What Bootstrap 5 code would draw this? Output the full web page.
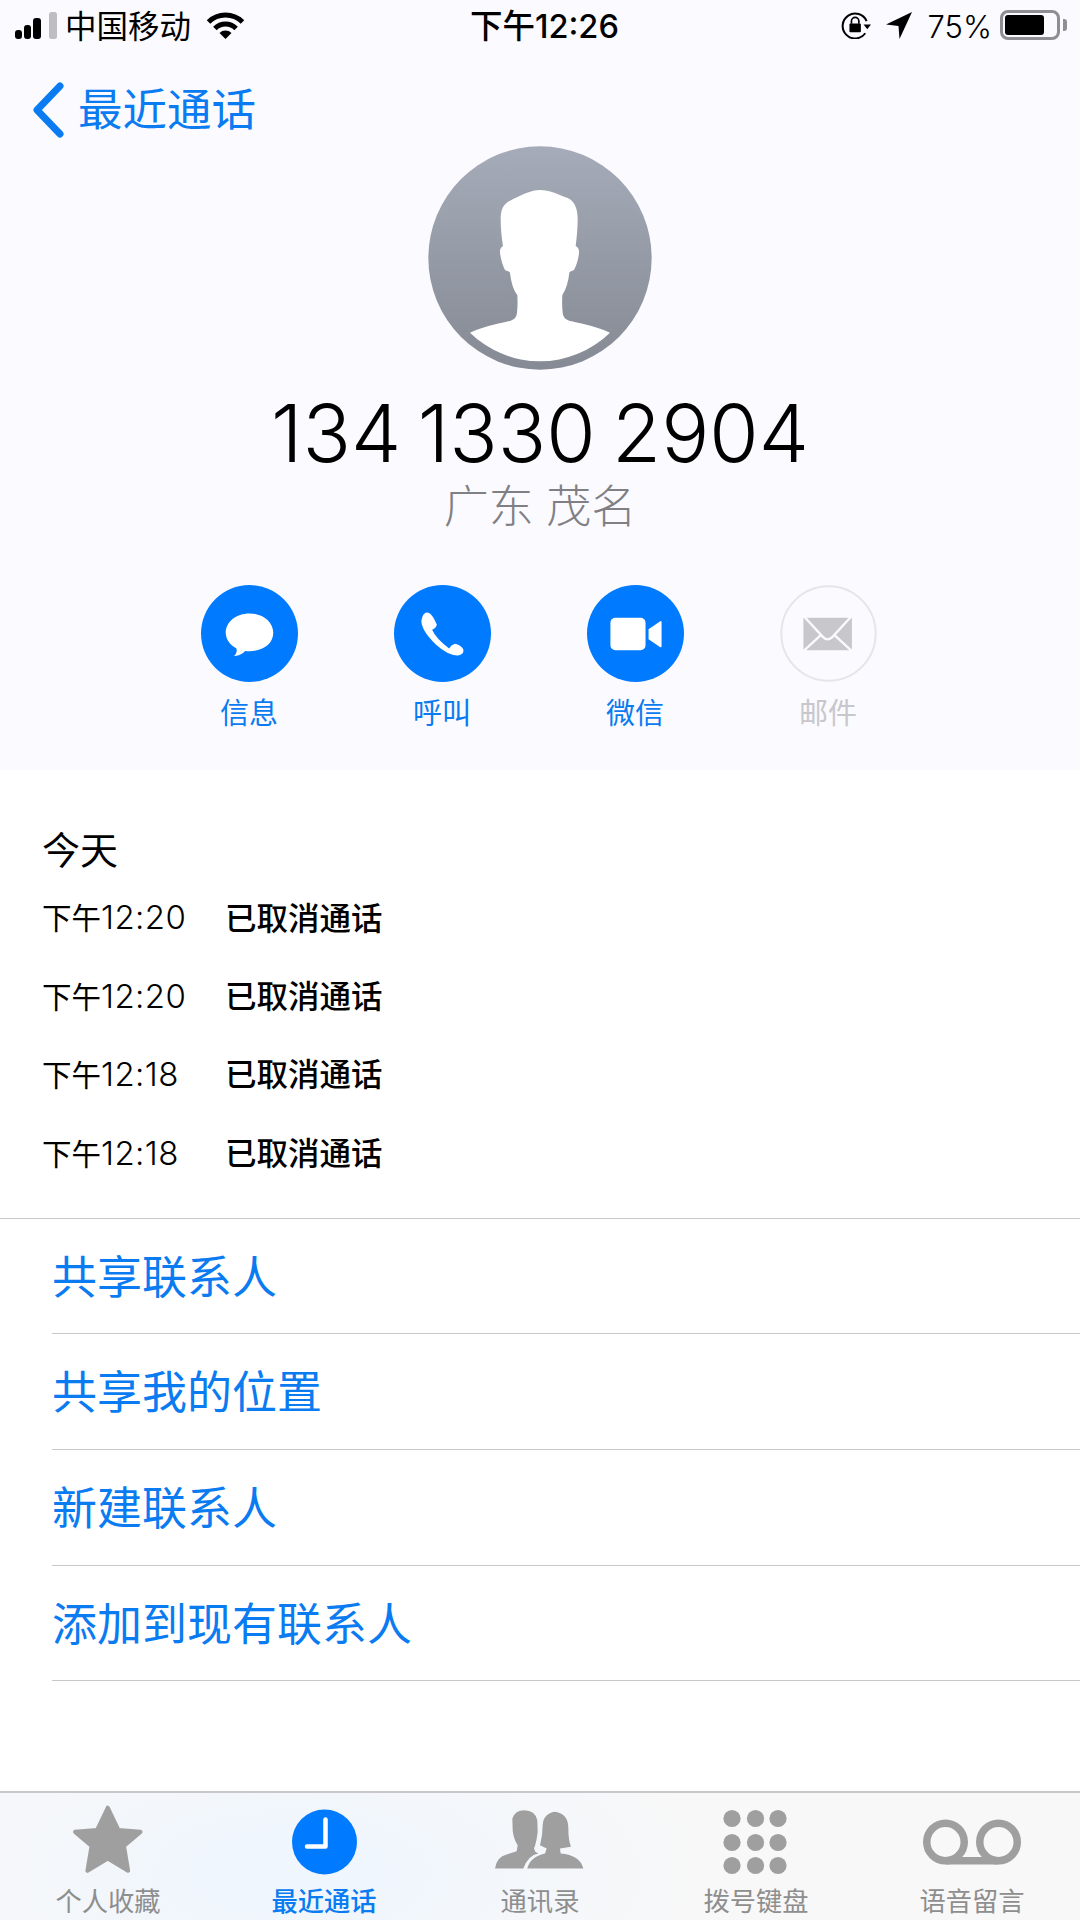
<!DOCTYPE html>
<html lang="zh">
<head>
<meta charset="utf-8">
<title>最近通话</title>
<link href="https://cdn.jsdelivr.net/npm/bootstrap@5.3.0/dist/css/bootstrap.min.css" rel="stylesheet">
<style>
html,body{margin:0;width:1080px;height:1920px;overflow:hidden;background:#fff}
body{font-family:Inter,"Noto Sans CJK SC",sans-serif;color:#000}
.phone{width:1080px;height:1920px}
.hero{height:770px;background:#fbfaff;flex:none}
.sbar{height:50px;padding:3px 13px 0 0}
.sleft{flex:0 0 470px;padding-left:15px;font-size:31.500px}
.sleft svg{margin-top:-3px}
.stime{font-size:32.500px;font-weight:500;line-height:47px;width:148px;white-space:nowrap}
.spct{font-size:31px;font-weight:300;line-height:47px;margin:0 8px 0 16px}
.lockic{margin-right:14px}
.sright svg,.sright .batt,.sright .nub{margin-top:-3px}
.batt{width:60px;height:30px;border:3px solid #8e8e93;border-radius:8px;padding:2px}
.battin{width:39px;height:100%;background:#000;border-radius:3px}
.nub{width:4px;height:12px;background:#8e8e93;border-radius:0 3px 3px 0;margin:0 0 0 3px}
.backrow{height:50px;margin-top:35px;padding-left:30px;color:#0a7bf0;font-size:44.500px;line-height:50px;text-decoration:none}
.backrow svg{margin-right:12px}
.avatar{margin:11px auto 0;display:block}
.phnum{font-size:80px;font-weight:350;line-height:88px;margin-top:19px;word-spacing:-6px}
.region{font-size:45px;line-height:50px;margin-top:5px;color:#808084;font-weight:300}
.acts{margin-top:53px;padding-right:3px}
.actitem{width:193px;font-size:29px;line-height:38px;color:#0a7bf0}
.actitem svg{display:block;margin:0 auto 13px}
.actoff{color:#c7c7cc}
.hist{padding:55px 0 25px 42px;border-bottom:1px solid #c8c7cc;flex:none}
.histh{font-size:38px;line-height:50px;margin-bottom:4px}
.hrow{height:78.400px;font-size:29.500px}
.htime{width:183px}
.tnum{font-size:33px;font-weight:300;letter-spacing:.4px}
.hstat{font-weight:500;font-size:31.500px}
.actlist.list-group-flush>.list-group-item{height:115.700px;margin-left:52px;padding:3px 0 0;border:0;border-bottom:1px solid #c8c7cc;background:transparent;color:#0a7bf0;font-size:45px;font-weight:400;display:flex;align-items:center}
.tabs{margin-top:auto;height:129px;border-top:2px solid #c8c7cc;background:radial-gradient(ellipse 420px 190px at 290px 80px,#f0f6fd 20%,#f8f8f8 100%);overflow:hidden;flex:none}
.tabitem{width:216px;font-size:26.300px;line-height:36px;color:#8e8e8e;white-space:nowrap}
.tabitem svg{display:block;margin:0 auto}
.tabon{color:#0a7bf0;font-weight:500}
</style>
</head>
<body>
<div class="phone d-flex flex-column">
  <section class="hero">
    <div class="sbar d-flex align-items-center">
      <div class="sleft d-flex align-items-center">
        <svg width="42" height="27" viewBox="0 0 42 27" fill="#000"><rect x="0" y="18" width="7" height="9" rx="3"/><rect x="9" y="13" width="7" height="14" rx="3"/><rect x="18" y="6" width="8" height="21" rx="3"/><rect x="34" y="0" width="8" height="27" rx="2.500" fill="#bdbdc2"/></svg>
        <span class="ms-2">中国移动</span>
        <svg class="ms-3" width="37" height="27" viewBox="0 0 37 27" fill="none" stroke="#000" stroke-width="5"><path d="M1.500 10A24 24 0 0 1 35.500 10"/><path d="M7.900 16.400A15 15 0 0 1 29.100 16.400"/><path d="M18.500 27L12.500 21A8.500 8.500 0 0 1 24.500 21Z" fill="#000" stroke="none"/></svg>
      </div>
      <div class="stime">下午12:26</div>
      <div class="sright flex-grow-1 d-flex align-items-center justify-content-end">
        <svg class="lockic" width="32" height="27" viewBox="62 25 95 80" fill="none" stroke="#000" stroke-width="6"><path d="M141 52A37 37 0 1 0 137 88"/><path d="M132 62L154 62L143 76Z" fill="#000" stroke="none"/><rect x="90" y="59" width="34" height="26" rx="3" fill="#000" stroke="none"/><path d="M96 60V52A11 11 0 0 1 118 52V60" stroke-width="5"/></svg>
        <svg width="26" height="27" viewBox="0 0 26 27"><path d="M26 0L0 12.500L12.500 14L13.500 27Z" fill="#000"/></svg>
        <span class="spct">75%</span>
        <div class="batt"><div class="battin"></div></div>
        <div class="nub"></div>
      </div>
    </div>
    <a class="backrow d-flex align-items-center" href="#">
      <svg width="36" height="56" viewBox="0 0 36 56" fill="none" stroke="#0a7bf0" stroke-width="7" stroke-linecap="round" stroke-linejoin="round"><path d="M30 4L7 28L30 52"/></svg>
      <span>最近通话</span>
    </a>
    <svg class="avatar" width="224" height="224" viewBox="85 48 670 672">
      <defs><linearGradient id="av" x1="0" y1="0" x2="0" y2="1"><stop offset="0" stop-color="#a5abb8"/><stop offset="1" stop-color="#858a94"/></linearGradient></defs>
      <circle cx="420" cy="384" r="335" fill="url(#av)"/>
      <path fill="#fff" d="M420 180C450 180 470 192 505 205C525 216 533 238 533 268C533 295 530 325 527 348C534 352 538 358 537 368C535 392 528 408 522 420C515 424 510 424 508 428C505 455 498 478 487 495C486 515 486 530 488 548C490 565 500 570 515 574C555 583 595 592 630 608A300 300 0 0 1 210 608C245 592 285 583 325 574C340 570 349 565 351 548C353 530 353 515 352 495C340 480 333 455 330 428C328 424 322 424 315 420C309 408 303 392 300 368C299 358 303 352 309 348C305 325 302 295 302 268C302 238 310 222 330 212C360 198 390 180 420 180Z"/>
    </svg>
    <div class="phnum text-center">134 1330 2904</div>
    <div class="region text-center">广东 茂名</div>
    <div class="acts d-flex justify-content-center text-center">
      <div class="actitem">
        <svg width="97" height="97" viewBox="0 0 290 290"><circle cx="145" cy="145" r="145" fill="#007aff"/><path fill="#fff" d="M145 85C185 85 216 110 216 143C216 176 185 198 145 198C140 198 136 198 132 197C125 205 112 212 99 212C106 205 108 198 106 190C87 180 74 163 74 143C74 110 105 85 145 85Z"/></svg>
        信息
      </div>
      <div class="actitem">
        <svg width="97" height="97" viewBox="0 0 290 290"><circle cx="145" cy="145" r="145" fill="#007aff"/><path fill="#fff" d="M85 95Q92 78 105 84Q114 88 128 118Q127 128 114 134Q125 160 165 190Q170 180 182 176Q200 180 207 192Q211 205 195 210Q165 214 125 178Q80 135 82 105Z"/></svg>
        呼叫
      </div>
      <div class="actitem">
        <svg width="97" height="97" viewBox="0 0 290 290"><circle cx="145" cy="145" r="145" fill="#007aff"/><rect x="70" y="98" width="105" height="97" rx="15" fill="#fff"/><path fill="#fff" d="M184 132L218 109Q223 106 223 112V182Q223 188 218 185L184 162Z"/></svg>
        微信
      </div>
      <div class="actitem actoff">
        <svg width="97" height="97" viewBox="0 0 290 290"><circle cx="145" cy="145" r="141" fill="none" stroke="#e5e5ea" stroke-width="6"/><rect x="70" y="98" width="145" height="97" fill="#c7c7cc"/><path fill="none" stroke="#fbfaff" stroke-width="7" d="M72 94L128 155Q142 170 157 155L213 94M70 198L122 150M215 198L163 150"/></svg>
        邮件
      </div>
    </div>
  </section>
  <section class="hist">
    <div class="histh">今天</div>
    <div class="hrow d-flex align-items-center"><span class="htime">下午<span class="tnum">12:20</span></span><span class="hstat">已取消通话</span></div>
    <div class="hrow d-flex align-items-center"><span class="htime">下午<span class="tnum">12:20</span></span><span class="hstat">已取消通话</span></div>
    <div class="hrow d-flex align-items-center"><span class="htime">下午<span class="tnum">12:18</span></span><span class="hstat">已取消通话</span></div>
    <div class="hrow d-flex align-items-center"><span class="htime">下午<span class="tnum">12:18</span></span><span class="hstat">已取消通话</span></div>
  </section>
  <div class="list-group list-group-flush actlist">
    <div class="list-group-item">共享联系人</div>
    <div class="list-group-item">共享我的位置</div>
    <div class="list-group-item">新建联系人</div>
    <div class="list-group-item">添加到现有联系人</div>
  </div>
  <nav class="tabs d-flex text-center">
    <div class="tabitem">
      <svg width="130" height="91" viewBox="124.900 42.100 377.500 264.300" fill="#9f9f9f" stroke="#9f9f9f" stroke-width="12" stroke-linejoin="round"><path d="M313 85L344 150L408 155L360 196L372 268L313 232L254 268L266 196L218 155L282 150Z"/></svg>
      个人收藏
    </div>
    <div class="tabitem tabon">
      <svg width="130" height="91" viewBox="259 1794.500 130 91"><circle cx="324.500" cy="1843.500" r="32.500" fill="#007aff"/><path d="M325.500 1821V1848H307" fill="none" stroke="#fff" stroke-width="4.500" stroke-linecap="round" stroke-linejoin="round"/></svg>
      最近通话
    </div>
    <div class="tabitem">
      <svg width="130" height="91" viewBox="15 -16.500 390 273" fill="#9f9f9f"><path d="M163 35Q195 35 202 65L203 100Q200 130 192 150L196 160L205 165Q175 170 160 210L75 210Q80 175 110 168L140 158L143 140Q130 120 128 95L127 60Q135 35 163 35Z"/><path d="M255 40Q295 45 295 90Q295 125 303 145L270 150L272 165Q330 170 340 210L172 210Q180 175 225 165L230 150L210 140Q218 110 218 80Q220 45 255 40Z"/></svg>
      通讯录
    </div>
    <div class="tabitem">
      <svg width="130" height="91" viewBox="691 1794.500 130 91" fill="#9f9f9f"><circle cx="732" cy="1820" r="8.600"/><circle cx="755.500" cy="1820" r="8.600"/><circle cx="778" cy="1820" r="8.600"/><circle cx="732" cy="1844" r="8.600"/><circle cx="755.500" cy="1844" r="8.600"/><circle cx="778" cy="1844" r="8.600"/><circle cx="732" cy="1867" r="8.600"/><circle cx="755.500" cy="1867" r="8.600"/><circle cx="778" cy="1867" r="8.600"/></svg>
      拨号键盘
    </div>
    <div class="tabitem">
      <svg width="130" height="91" viewBox="906 1794.500 130 91" fill="none" stroke="#9f9f9f" stroke-width="7.500"><circle cx="944.500" cy="1843.500" r="18.750"/><circle cx="997.500" cy="1843.500" r="18.750"/><path d="M944.500 1862.250H997.500"/></svg>
      语音留言
    </div>
  </nav>
</div>
<script src="https://cdn.jsdelivr.net/npm/bootstrap@5.3.0/dist/js/bootstrap.bundle.min.js"></script>
</body>
</html>
